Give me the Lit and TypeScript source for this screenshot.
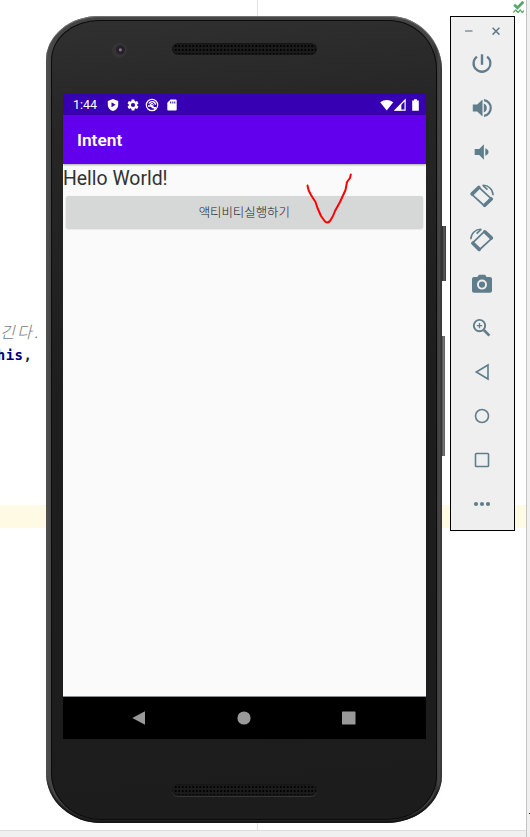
import { LitElement, html, css, svg } from "lit";
import { customElement } from "lit/decorators.js";

const tools = [
  // power
  svg`<path d="M6.900 4.700a8.400 8.400 0 1 0 10.200 0" fill="none" stroke="currentColor" stroke-width="2.300"/><path d="M10.800 2.300h2.400v10.500h-2.400z"/>`,
  // volume up
  svg`<path d="M2.800 8.600h4.400l5.300-5.200v17.200l-5.300-5.200H2.800zM13.800 7.600q3 1.200 3 4.400t-3 4.400z"/><path d="M14 4.100a8 8 0 0 1 0 15.800" fill="none" stroke="currentColor" stroke-width="2.200"/>`,
  // volume down
  svg`<path d="M4.700 8.900h4.500l4.700-4.700v15.600l-4.700-4.700H4.700zM15.300 8.200q3.200 1.200 3.200 3.800t-3.200 3.800z"/>`,
  // rotate left
  svg`<g fill="none" stroke="currentColor"><path d="M9 3.300 1.800 10.400 14.600 22 21.600 15.100z" stroke-width="1.700" stroke-linejoin="round"/><path d="M2.200 9.900 8.800 3.500M14.700 21.300l6.500-6.300" stroke-width="3.600" stroke-linecap="round"/><path d="M12.500 1.400C18.500 1 22.900 5.300 23.100 11.200" stroke-width="1.500"/><path d="m13 1.500 4.400 4.200" stroke-width="1.700"/></g>`,
  // rotate right
  svg`<g fill="none" stroke="currentColor"><path d="M14.500 3.400 21.800 10.400 9.200 22 2.400 15.100z" stroke-width="1.700" stroke-linejoin="round"/><path d="m21.300 9.900-6.500-6.100M9.200 21.400l-6.300-6.200" stroke-width="3.600" stroke-linecap="round"/><path d="M11.500 1.400C5.500 1 1 5.300.8 11.200" stroke-width="1.500"/><path d="M11 1.500 6.600 5.700" stroke-width="1.700"/></g>`,
  // camera
  svg`<path fill-rule="evenodd" d="M9 2.800h6l1.700 2.200h3.300a2 2 0 0 1 2 2v11.800a2 2 0 0 1-2 2H4a2 2 0 0 1-2-2V7a2 2 0 0 1 2-2h3.300zM12 7.600a5 5 0 1 0 0 10 5 5 0 0 0 0-10zm0 1.900a3.100 3.100 0 1 1 0 6.200 3.100 3.100 0 0 1 0-6.200z"/>`,
  // zoom
  svg`<g fill="none" stroke="currentColor"><circle cx="9.500" cy="9.600" r="5.700" stroke-width="1.900"/><path d="m13.800 14 5.600 5.600" stroke-width="2.600"/><path d="M9.500 6.900v5.400M6.800 9.600h5.400" stroke-width="1.300"/></g>`,
  // back
  svg`<path d="M18 5v14L6.300 12z" fill="none" stroke="currentColor" stroke-width="1.600"/>`,
  // home
  svg`<circle cx="12" cy="12" r="6.500" fill="none" stroke="currentColor" stroke-width="1.600"/>`,
  // overview
  svg`<rect x="5.500" y="5.500" width="13" height="13" rx=".8" fill="none" stroke="currentColor" stroke-width="1.600"/>`,
  // more
  svg`<circle cx="6" cy="12" r="2.100"/><circle cx="12" cy="12" r="2.100"/><circle cx="18" cy="12" r="2.100"/>`,
];

@customElement("emulator-toolbar")
class EmulatorToolbar extends LitElement {
  static styles = css`
    :host { display: flex; flex-direction: column; box-sizing: border-box; width: 65px; height: 515px;
      border: 1px solid #000; background: #efefef; color: #607d8b; }
    .window { display: flex; justify-content: space-between; height: 25px; padding: 8px 13px 0; box-sizing: border-box; }
    .window svg { width: 10px; height: 12px; display: block; }
    .tools { display: flex; flex-direction: column; gap: 20px; padding: 10px 0 0 19px; }
    .tools svg { width: 24px; height: 24px; display: block; fill: currentColor; }
  `;
  render() {
    return html`
      <div class="window">
        <svg viewBox="0 0 10 12"><path d="M1 6h7.500" stroke="#9aabb3" stroke-width="2"/></svg>
        <svg viewBox="0 0 10 12"><path d="m1.600 2.800 6.800 6.800m0-6.800L1.600 9.600" stroke="currentColor" stroke-width="1.500"/></svg>
      </div>
      <div class="tools">${tools.map((t) => html`<svg viewBox="0 0 24 24">${t}</svg>`)}</div>
    `;
  }
}

@customElement("phone-screen")
class PhoneScreen extends LitElement {
  static styles = css`
    :host { display: flex; flex-direction: column; width: 363px; height: 645px; background: #fafafa;
      font-family: Roboto, "Noto Sans CJK KR", sans-serif; }
    svg { display: block; }
    .status { height: 21px; background: #3700b3; color: #fff; display: flex; align-items: center;
      padding: 0 6px 0 10px; font-size: 12.5px; line-height: 21px; }
    .time { width: 33px; }
    .notes { display: flex; gap: 5.5px; flex: 1; }
    .notes svg { width: 14px; height: 14px; fill: #fff; }
    .signals { width: 42px; height: 14px; fill: #fff; }
    .bar { height: 49px; background: #6200ee; color: #fff; box-sizing: border-box; padding: 1px 0 0 14px;
      font-size: 17.3px; font-weight: 600; line-height: 49px; box-shadow: 0 1px 2px #0005; z-index: 1; }
    .content { flex: 1; }
    .hello { height: 29px; font-size: 19.4px; line-height: 29px; color: #323232; white-space: nowrap; }
    .action { display: block; margin: 2.5px 3.5px 0 3px; width: 356.5px; height: 32px; padding: 0; border: 0;
      border-radius: 2px; background: #d6d7d7; box-shadow: 0 1px 2px #0003; color: #1c1c1c;
      font: 300 12.4px/32px "Noto Sans CJK KR", sans-serif; }
    .nav { height: 43px; box-sizing: border-box; border-top: 1px solid #8b8f91; background: #000;
      display: flex; justify-content: center; gap: 91px; align-items: center; padding: 0 2px 1px 0; }
    .nav svg { width: 14px; height: 14px; fill: #999; }
  `;
  render() {
    return html`
      <div class="status">
        <span class="time">1:44</span>
        <div class="notes">
          <svg viewBox="0 0 14 14"><path fill-rule="evenodd" d="M7 1l5.200 1.900v4C12.200 10 10 12 7 13 4 12 1.800 10 1.800 6.900v-4zM5.500 4.300v5L9.500 6.800z"/></svg>
          <svg viewBox="0 0 24 24"><path d="M19.140 12.940c.040-.300.060-.610.060-.940s-.020-.640-.070-.940l2.030-1.580a.49.49 0 0 0 .120-.610l-1.920-3.320a.49.49 0 0 0-.590-.220l-2.390.960a7 7 0 0 0-1.620-.940L14.400 2.810a.48.48 0 0 0-.480-.410h-3.840a.47.47 0 0 0-.470.410l-.360 2.540a7.200 7.200 0 0 0-1.620.940l-2.390-.960a.47.47 0 0 0-.590.220L2.740 8.870a.47.47 0 0 0 .120.610l2.030 1.580a6 6 0 0 0 0 1.880l-2.030 1.580a.49.49 0 0 0-.120.610l1.920 3.320c.120.220.370.290.590.220l2.390-.960c.500.380 1.030.700 1.620.940l.360 2.540c.050.240.240.410.480.410h3.840c.240 0 .440-.170.470-.410l.360-2.540a7 7 0 0 0 1.620-.940l2.390.960c.220.080.470 0 .590-.220l1.920-3.320a.47.47 0 0 0-.120-.610zM12 15.600a3.600 3.600 0 1 1 0-7.200 3.600 3.600 0 0 1 0 7.200z"/></svg>
          <svg viewBox="0 0 14 14"><g fill="none" stroke="#fff"><circle cx="7" cy="7" r="5.700" stroke-width="1.200"/><path d="M3.800 5.500Q5 3.500 7.300 3.600q3 .2 3.200 3.200M3 8h3.200l1.300 1.600h3.600M5 6l5.200 5" stroke-width="1.300"/><circle cx="7" cy="6.700" r="1.300" stroke-width="1"/></g></svg>
          <svg viewBox="0 0 14 14"><path fill-rule="evenodd" d="M5.500 1.600h5.200q1 0 1 1v9q0 1-1 1H3.300q-1 0-1-1V4.800zM5.200 3.400v2h1v-2zM7.300 3.400v2h1v-2zM9.300 3.400v2h1v-2z"/></svg>
        </div>
        <svg class="signals" viewBox="0 0 42 14"><path d="M2.200 4.300Q8.700-.4 15.300 4.300L8.700 12.600z"/><path d="M27.100 2v10.100H17.200z" fill="none" stroke="#fff" stroke-width="1.200"/><path d="M23.300 5.600v6.900h-6.800z"/><path d="M36 1.300h3v1.300h1.800v10.100h-6.600V2.600H36z"/></svg>
      </div>
      <div class="bar">Intent</div>
      <div class="content">
        <div class="hello">Hello World!</div>
        <button class="action">액티비티실행하기</button>
      </div>
      <div class="nav">
        <svg viewBox="0 0 14 14"><path d="M13 .300v13.400L.300 7z"/></svg>
        <svg viewBox="0 0 14 14"><circle cx="7" cy="7" r="6.600"/></svg>
        <svg viewBox="0 0 14 14"><rect x="0" y=".5" width="13.500" height="13" rx=".5"/></svg>
      </div>
    `;
  }
}

@customElement("phone-frame")
class PhoneFrame extends LitElement {
  static styles = css`
    :host { display: block; width: 400px; height: 807px; position: relative; }
    .key { position: absolute; right: 0; width: 6px; background: linear-gradient(90deg, #333 50%, #666 65%, #333); }
    .power { top: 210px; height: 55px; }
    .volume { top: 320px; height: 120px; right: 1px; background: linear-gradient(90deg, #333 40%, #777 75%, #555); }
    .body { position: relative; box-sizing: border-box; width: 396px; height: 807px; border-radius: 53px 53px 55px 55px / 44px 54px 48px 50px;
      background: linear-gradient(90deg, #5e5e5e, #484848 3px, #444 30px, #444 386px, #353132 390px, #4b4748 393px, #373535);
      padding: 4px 5px 3px 5px; box-shadow: inset 0 1px 1px #777, inset 0 -3px 2px #151515; }
    .face { height: 800px; box-sizing: border-box; border: 1px solid #0b0b0b; border-radius: 48px 48px 50px 50px / 40px 49px 44px 46px;
      background: linear-gradient(175deg, #303030 0, #262626 13%, #1e1e1e 45%, #1c1c1c 100%);
      display: flex; flex-direction: column; }
    .top { height: 73px; flex: none; display: flex; padding: 22px 0 0 60px; box-sizing: border-box; }
    .camera { width: 15px; height: 15px; border-radius: 50%;
      background: radial-gradient(circle at 56% 46%, #877089 0 1px, #25202a 2px 4px, #343434 5px 8px); }
    .speaker { width: 145px; height: 12px; border-radius: 6px; margin-left: 45px;
      background: radial-gradient(circle, #030303 0 .8px, transparent 1.2px) 2px 1px / 3.5px 4px, #1b1b1b;
      box-shadow: inset 0 0 1px 1px #171717; }
    .bottom { display: flex; padding: 45px 0 0 120px; }
    .bottom .speaker { margin: 0; box-shadow: inset 0 0 1px 1px #171717, 0 1px 0 #353535; }
    phone-screen { margin-left: 11px; flex: none; }
  `;
  render() {
    return html`
      <div class="key power"></div><div class="key volume"></div>
      <div class="body"><div class="face">
        <div class="top"><div class="camera"></div><div class="speaker"></div></div>
        <phone-screen></phone-screen>
        <div class="bottom"><div class="speaker"></div></div>
      </div></div>
    `;
  }
}

@customElement("app-root")
class AppRoot extends LitElement {
  static styles = css`
    :host { display: block; position: relative; width: 530px; height: 837px; overflow: hidden; background: #fff; }
    .editor { display: grid; grid-template-columns: 526px 4px; grid-template-rows: 830px 7px; height: 837px; }
    .code { background: linear-gradient(#e2e2e2, #e2e2e2) 257px 0 / 1px 100% no-repeat; overflow: hidden;
      display: flex; flex-direction: column; box-sizing: border-box; padding-top: 319px; }
    .line { height: 24px; line-height: 24px; white-space: pre; flex: none; }
    .comment { font: italic 300 16px/24px "Noto Sans CJK KR", sans-serif; color: #777; letter-spacing: 2.3px; }
    .keyword { font: bold 14px/24px "DejaVu Sans Mono", monospace; letter-spacing: .5px; color: #000080; text-indent: -3.3px; }
    .keyword span { color: #222; }
    .current { height: 23px; margin-top: 138px; background: #fffae3; flex: none; }
    .rail { box-sizing: border-box; border-left: 1px solid #c4c4c4; background: #f0f0f0; grid-row: 1 / 3; grid-column: 2; padding-top: 813px; }
    .mark { width: 2px; height: 1px; margin-left: 2px; background: #511; }
    .foot { box-sizing: border-box; border-top: 1px solid #ddd; background: #f0f0f0; }
    .check { position: absolute; left: 512px; top: 0; width: 13px; height: 14px; }
    phone-frame { position: absolute; left: 46px; top: 16px; }
    emulator-toolbar { position: absolute; left: 450px; top: 16px; }
    .scribble { position: absolute; left: 300px; top: 168px; width: 60px; height: 60px; }
  `;
  render() {
    return html`
      <div class="editor">
        <div class="code">
          <div class="line comment">긴다.</div>
          <div class="line keyword">his<span>,</span></div>
          <div class="current"></div>
        </div>
        <div class="rail"><div class="mark"></div></div>
        <div class="foot"></div>
      </div>
      <svg class="check" viewBox="0 0 13 14" fill="none" stroke="#59a869">
        <path d="m2.200 4.800 3.200 3 6-6" stroke-width="2.700"/>
        <path d="m1.300 12.500 2.500-2.500 2.200 2.500 2.300-2.500 2 2.500 1.600-1.800" stroke-width="1.200"/>
      </svg>
      <phone-frame></phone-frame>
      <emulator-toolbar></emulator-toolbar>
      <svg class="scribble" viewBox="300 168 60 60" fill="none" stroke="#f00" stroke-width="2" stroke-linecap="round" stroke-linejoin="round">
        <path d="M307.500 185.500 308.500 190 311 195 315.500 202 317.500 208 321 216 325 221.500Q327.500 223.700 330 221L333 216 335 211 340 202 345.500 190 347 182 350 178 350.800 174.500"/>
      </svg>
    `;
  }
}
